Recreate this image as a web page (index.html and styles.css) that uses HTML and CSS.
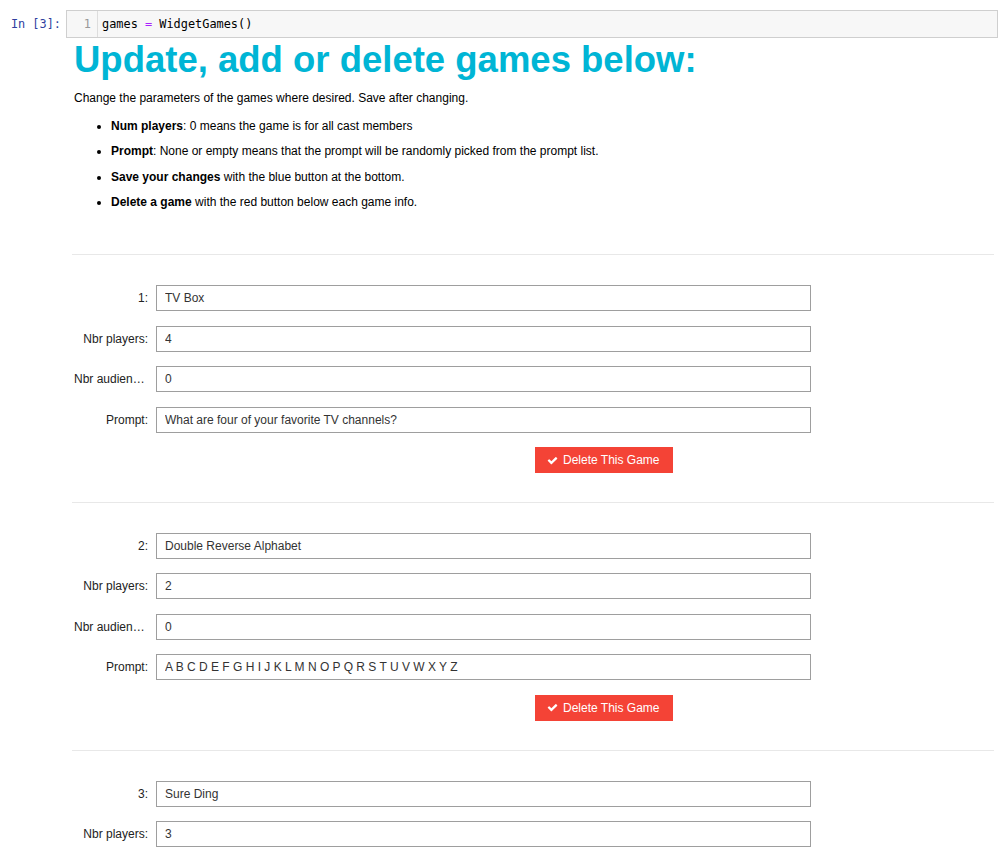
FILE: index.html
```html
<!DOCTYPE html>
<html>
<head>
<meta charset="utf-8">
<link rel="stylesheet" href="styles.css">
</head>
<body>
<div class="cell">
  <div class="prompt">In [3]:</div>
  <div class="editor">
    <div class="gutter">1</div>
    <div class="code">games <span class="op">=</span> WidgetGames()</div>
  </div>
</div>
<div class="output">
  <h1 class="title">Update, add or delete games below:</h1>
  <p class="intro">Change the parameters of the games where desired. Save after changing.</p>
  <ul class="notes">
    <li><b>Num players</b>: 0 means the game is for all cast members</li>
    <li><b>Prompt</b>: None or empty means that the prompt will be randomly picked from the prompt list.</li>
    <li><b>Save your changes</b> with the blue button at the bottom.</li>
    <li><b>Delete a game</b> with the red button below each game info.</li>
  </ul>

  <section class="game">
    <div class="row"><label class="lbl">1:</label><input class="txt" type="text" value="TV Box"></div>
    <div class="row"><label class="lbl">Nbr players:</label><input class="txt" type="text" value="4"></div>
    <div class="row"><label class="lbl">Nbr audience:</label><input class="txt" type="text" value="0"></div>
    <div class="row"><label class="lbl">Prompt:</label><input class="txt" type="text" value="What are four of your favorite TV channels?"></div>
    <div class="btn-row"><button class="del"><svg class="chk" viewBox="0 0 1792 1792"><path d="M1671 566q0 40-28 68l-724 724-136 136q-28 28-68 28t-68-28l-136-136-362-362q-28-28-28-68t28-68l136-136q28-28 68-28t68 28l294 295 656-657q28-28 68-28t68 28l136 136q28 28 28 68z"/></svg>Delete This Game</button></div>
  </section>

  <section class="game">
    <div class="row"><label class="lbl">2:</label><input class="txt" type="text" value="Double Reverse Alphabet"></div>
    <div class="row"><label class="lbl">Nbr players:</label><input class="txt" type="text" value="2"></div>
    <div class="row"><label class="lbl">Nbr audience:</label><input class="txt" type="text" value="0"></div>
    <div class="row"><label class="lbl">Prompt:</label><input class="txt" type="text" value="A B C D E F G H I J K L M N O P Q R S T U V W X Y Z"></div>
    <div class="btn-row"><button class="del"><svg class="chk" viewBox="0 0 1792 1792"><path d="M1671 566q0 40-28 68l-724 724-136 136q-28 28-68 28t-68-28l-136-136-362-362q-28-28-28-68t28-68l136-136q28-28 68-28t68 28l294 295 656-657q28-28 68-28t68 28l136 136q28 28 28 68z"/></svg>Delete This Game</button></div>
  </section>

  <section class="game">
    <div class="row"><label class="lbl">3:</label><input class="txt" type="text" value="Sure Ding"></div>
    <div class="row"><label class="lbl">Nbr players:</label><input class="txt" type="text" value="3"></div>
  </section>
</div>
</body>
</html>
```
FILE: styles.css
```css
html, body {
  margin: 0;
  padding: 0;
  background: #fff;
  overflow: hidden;
}
body {
  font-family: "Liberation Sans", Arial, sans-serif;
  font-size: 12px;
  color: #000;
}
.cell {
  display: flex;
  padding-top: 10px;
}
.prompt {
  width: 66px;
  box-sizing: border-box;
  padding-right: 5px;
  text-align: right;
  font-family: "DejaVu Sans Mono", monospace;
  font-size: 11.9px;
  line-height: 28px;
  color: #303f9f;
  flex: none;
}
.editor {
  flex: 1;
  margin-right: 5px;
  height: 28px;
  box-sizing: border-box;
  border: 1px solid #cfcfcf;
  background: #f7f7f7;
  display: flex;
  font-family: "DejaVu Sans Mono", monospace;
  font-size: 11.9px;
  line-height: 26px;
}
.gutter {
  width: 31px;
  box-sizing: border-box;
  border-right: 1px solid #ddd;
  text-align: right;
  padding-right: 6px;
  color: #999;
}
.code {
  padding-left: 4px;
  color: #000;
}
.op { color: #aa22ff; }

.output {
  margin: 0 9px 0 72px;
}
.title {
  margin: 1px 0 0 2px;
  font-size: 36.5px;
  line-height: 42px;
  font-weight: bold;
  color: #00b5d5;
}
.intro {
  margin: 9px 0 0 2px;
  line-height: 17px;
}
.notes {
  margin: 10.5px 0 0 0;
  padding-left: 39px;
}
.notes li {
  line-height: 17px;
  margin-bottom: 8.67px;
}
.notes li:last-child { margin-bottom: 0; }

.game {
  border-top: 1px solid #e8e8e8;
  padding: 30px 0 29px;
}
.notes + .game { margin-top: 43px; }
.row {
  display: flex;
  align-items: center;
  height: 26px;
  margin-bottom: 14.4px;
}
.game:last-child .row:last-child { margin-bottom: 0; }
.lbl {
  width: 84px;
  box-sizing: border-box;
  padding: 0 8px 0 2px;
  text-align: right;
  white-space: nowrap;
  overflow: hidden;
  text-overflow: ellipsis;
  color: #222;
  flex: none;
}
.txt {
  width: 655px;
  height: 26px;
  box-sizing: border-box;
  border: 1px solid #9e9e9e;
  padding: 0 8px;
  margin: 0;
  font-family: "Liberation Sans", Arial, sans-serif;
  font-size: 12px;
  color: #333;
  background: #fff;
  outline: none;
}
.btn-row {
  display: flex;
  padding-left: 463px;
}
.del {
  height: 26px;
  width: 138px;
  border: none;
  margin: 0;
  padding: 0 12px;
  background: #f44336;
  color: #fff;
  font-family: "Liberation Sans", Arial, sans-serif;
  font-size: 12px;
  display: flex;
  align-items: center;
  gap: 5px;
}
.chk {
  width: 11px;
  height: 11px;
  fill: #fff;
}
```
